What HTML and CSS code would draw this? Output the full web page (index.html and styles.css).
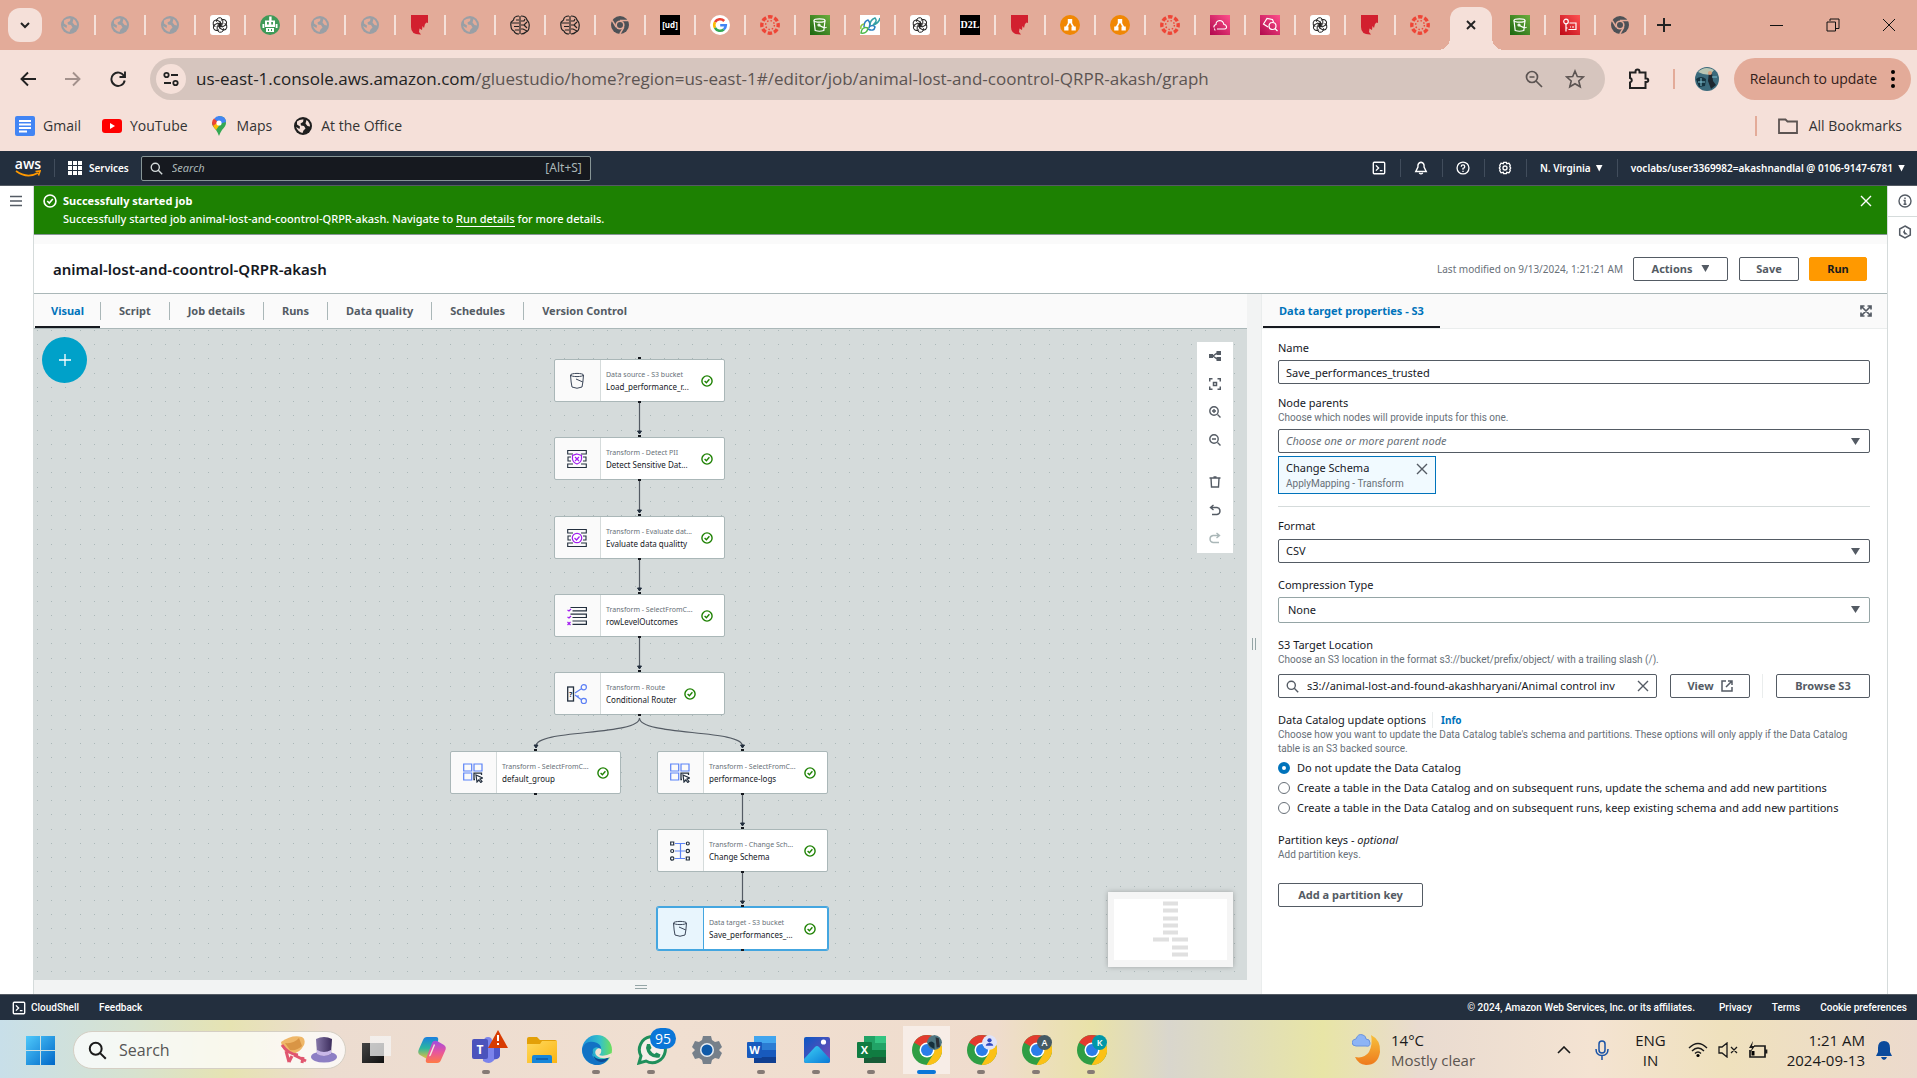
FILE: index.html
```html
<!DOCTYPE html>
<html lang="en">
<head>
<meta charset="utf-8">
<title>animal-lost-and-coontrol-QRPR-akash - AWS Glue Studio</title>
<link rel="stylesheet" href="styles.css">
</head>
<body>
<svg class="sprite" aria-hidden="true">
  <defs>
    <linearGradient id="g-green" x1="0" y1="1" x2="1" y2="0"><stop offset="0" stop-color="#1b660f"/><stop offset="1" stop-color="#6cae3e"/></linearGradient>
    <linearGradient id="g-pink" x1="0" y1="1" x2="1" y2="0"><stop offset="0" stop-color="#b0084d"/><stop offset="1" stop-color="#ff4f8b"/></linearGradient>
    <linearGradient id="g-red" x1="0" y1="1" x2="1" y2="0"><stop offset="0" stop-color="#bd0816"/><stop offset="1" stop-color="#ff5252"/></linearGradient>
    <linearGradient id="g-win" x1="0" y1="0" x2="1" y2="1"><stop offset="0" stop-color="#4fc9fb"/><stop offset="1" stop-color="#0067c8"/></linearGradient>
    <linearGradient id="g-cop1" x1="0" y1="0" x2="0" y2="1"><stop offset="0" stop-color="#1a7fe0"/><stop offset=".5" stop-color="#2bb6a0"/><stop offset="1" stop-color="#f2c037"/></linearGradient>
    <linearGradient id="g-cop2" x1="0" y1="0" x2="0" y2="1"><stop offset="0" stop-color="#a24be0"/><stop offset=".5" stop-color="#e6559f"/><stop offset="1" stop-color="#ff7a45"/></linearGradient>
    <linearGradient id="g-folder" x1="0" y1="0" x2="1" y2="1"><stop offset="0" stop-color="#ffd95e"/><stop offset="1" stop-color="#fbb512"/></linearGradient>
    <linearGradient id="g-edge" x1="0" y1="0" x2="1" y2="0"><stop offset="0" stop-color="#1b8fdc"/><stop offset=".6" stop-color="#35c1c9"/><stop offset="1" stop-color="#6ee05a"/></linearGradient>
    <linearGradient id="g-photo" x1="0" y1="0" x2="1" y2="1"><stop offset="0" stop-color="#0b57c4"/><stop offset="1" stop-color="#7d4cb5"/></linearGradient>
    <linearGradient id="g-mount" x1="0" y1="0" x2="1" y2="1"><stop offset="0" stop-color="#3ed2f5"/><stop offset="1" stop-color="#0a78d6"/></linearGradient>
    <linearGradient id="g-moon" x1="0" y1="0" x2="0" y2="1"><stop offset="0" stop-color="#f7c13c"/><stop offset="1" stop-color="#ee7a1c"/></linearGradient>
    <linearGradient id="g-hat" x1="0" y1="0" x2="1" y2="0"><stop offset="0" stop-color="#8577a8"/><stop offset="1" stop-color="#3b2c5c"/></linearGradient>
    <linearGradient id="g-dark" x1="0" y1="0" x2="1" y2="1"><stop offset="0" stop-color="#444"/><stop offset="1" stop-color="#111"/></linearGradient>
    <path id="petal" d="M6.400 6.800V5.800A3.300 3.300 0 0 1 12.300 4L12.800 4.800V9L10 10.700L7.600 9.300"/>
  </defs>
  <symbol id="globe" viewBox="0 0 20 20"><circle cx="10" cy="10" r="9" fill="currentColor"/><path d="M4 5.500Q7 3 10.500 3.500L10 6 7.500 7.500 8 9.500 11 10 12.500 12.500 10.500 14.500 9.500 17Q5 16 3 11L6.500 13 7 10.500 4 8.500ZM13.500 4Q17 6.500 17 10.500L14.500 10 12.500 7.500Z" fill="var(--hole)"/></symbol>
  <symbol id="gpt" viewBox="0 0 20 20"><rect width="20" height="20" rx="3" fill="#fff"/><g fill="none" stroke="#222" stroke-width="1"><use href="#petal"/><use href="#petal" transform="rotate(60 10 10)"/><use href="#petal" transform="rotate(120 10 10)"/><use href="#petal" transform="rotate(180 10 10)"/><use href="#petal" transform="rotate(240 10 10)"/><use href="#petal" transform="rotate(300 10 10)"/></g></symbol>
  <symbol id="robot" viewBox="0 0 20 20"><circle cx="10" cy="10" r="10" fill="#3f9a58"/><path d="M9.200 1.500h2.400v4H15v6.500H5V5.500h4.200Z" fill="#fff"/><path d="M6 13h8v4H6zM2.500 9h1.800v4H2.500zM15.700 9h1.800v4h-1.800z" fill="#fff"/><path d="M7 7h1.800v2.500H7zM11.200 7H13v2.500h-1.800zM8 14h1v2H8zM11 14h1v2h-1z" fill="#3f9a58"/></symbol>
  <symbol id="maple" viewBox="0 0 20 20"><path d="M1 0H18V8L16.500 7.500 15 9 14 13 12.500 11 12 15 9.500 13.500 9 17 11 19.500Q1 20 1 12Z" fill="#d2202f"/></symbol>
  <symbol id="brain" viewBox="0 0 20 20"><g fill="none" stroke="#222" stroke-width="1.200"><path d="M10 1v18M9 1Q4 1 3.500 5Q0 7 1 11Q1 15 4 16Q5 19 9 19M9 5H6M9 8H2M9 11.500H4M9 15H5M11 1Q16 1 17 5Q20 8 19 12Q19 16 16 17Q14 19 11 19M11 6h3l1-2M11 10h3l3-3M11 14h2l4 2M14 10l3 3"/></g></symbol>
  <symbol id="chromegrey" viewBox="0 0 20 20"><circle cx="10" cy="10" r="9" fill="#4d5156"/><circle cx="10" cy="10" r="4.600" fill="#e3ab99"/><circle cx="10" cy="10" r="3" fill="#4d5156"/><path d="M10 5.600H18M6.200 12.200L2.200 5.400M13.800 12.200L9.800 19" stroke="#e3ab99" stroke-width="1.500"/></symbol>
  <symbol id="google" viewBox="0 0 20 20"><circle cx="10" cy="10" r="10" fill="#fff"/><g fill="none" stroke-width="2.600"><path d="M14.200 6A5.800 5.800 0 0 0 5 7.200" stroke="#ea4335"/><path d="M5 7.200A5.800 5.800 0 0 0 5 12.800" stroke="#fbbc05"/><path d="M5 12.800A5.800 5.800 0 0 0 13.800 14.400" stroke="#34a853"/><path d="M13.800 14.400A5.600 5.600 0 0 0 15.800 10.200H10.200" stroke="#4285f4"/></g></symbol>
  <symbol id="canvas-lms" viewBox="0 0 20 20"><g fill="none" stroke="#ee4536"><circle cx="10" cy="10" r="8.200" stroke-width="3.400" stroke-dasharray="4.440 2" stroke-dashoffset="2.200"/><circle cx="10" cy="10" r="4.400" stroke-width="1.500" stroke-dasharray="1.450 2"/></g></symbol>
  <symbol id="s3tab" viewBox="0 0 20 20"><rect width="20" height="20" fill="url(#g-green)"/><g fill="none" stroke="#fff" stroke-width="1.200"><ellipse cx="9.500" cy="5.500" rx="5.500" ry="1.700"/><path d="M4 5.500L5.200 15.500Q9.500 17 13.800 15.500L15 5.500M9.500 10.500Q15 14 16.500 12"/><circle cx="9" cy="10" r="1"/></g></symbol>
  <symbol id="leafy" viewBox="0 0 20 20"><rect width="20" height="20" fill="#fff"/><g fill="none" stroke-width="1.500"><path d="M1 18Q2 11 8 13Q7 19 1 18Z" stroke="#4db848"/><path d="M4 12Q4 6 8 5Q11 8 9 13M8 14Q14 17 15 12Q13 9 9 12" stroke="#2a7fc0"/><path d="M10 10Q10 5 15 3Q18 6 13 10Q19 8 20 3" stroke="#34a0a4"/><path d="M1 14Q0 10 4 9" stroke="#8cc63f"/></g></symbol>
  <symbol id="drawio" viewBox="0 0 20 20"><circle cx="10" cy="10" r="10" fill="#f08705"/><path d="M10 6L6 13M10 6l4 7" stroke="#fff" stroke-width="1.600"/><path d="M7.800 4h4.400v4H7.800zM4.200 11.500h4.300v4H4.200zM11.500 11.500h4.300v4h-4.300z" fill="#fff"/></symbol>
  <symbol id="pink1" viewBox="0 0 20 20"><rect width="20" height="20" fill="url(#g-pink)"/><path d="M7 14H14.500Q17 13.500 16.500 11.500Q16 9.500 14 9.500Q13 5.500 9.500 5.500Q6 6 6 9.500Q3.500 10 4 12.500M5 14.500v1M4 14h1" fill="none" stroke="#fff" stroke-width="1.100"/></symbol>
  <symbol id="pink2" viewBox="0 0 20 20"><rect width="20" height="20" fill="url(#g-pink)"/><g fill="none" stroke="#fff" stroke-width="1.200"><path d="M8 12L3.500 9 7 3.500 12.500 4.500 13.500 7"/><circle cx="12.500" cy="11" r="3.500"/><path d="M15 13.500L17.500 16"/></g></symbol>
  <symbol id="iam" viewBox="0 0 20 20"><rect width="20" height="20" fill="url(#g-red)"/><g fill="none" stroke="#fff" stroke-width="1.200"><circle cx="6" cy="6.500" r="2.300"/><path d="M6 9v7.500M6 13h1.500M9.500 8H16v6.500H8.500M10 12h1M12 12h2"/></g></symbol>
  <symbol id="s3bucket" viewBox="0 0 20 20"><g fill="none" stroke="#3b4658" stroke-width="1"><ellipse cx="10" cy="4" rx="6.500" ry="1.600"/><path d="M3.500 4Q4 12 5 16Q10 18.500 15 16Q16 12 16.500 4M9 8L15.800 11"/></g></symbol>
  <symbol id="detect" viewBox="0 0 20 20"><g fill="none" stroke="#232f3e" stroke-width="1.100"><path d="M6 5H.700V1.500H19.300V5H14M6 15H.700V18.500H19.300V15H14M4 8H1v4h3M16 8h3v4h-3"/></g><path d="M10 5L14.500 6.500V10Q14 13.500 10 15Q6 13.500 5.500 10V6.500ZM8 8l4 4M12 8l-4 4" fill="#fff" stroke="#a21cf0" stroke-width="1.200"/></symbol>
  <symbol id="evaluate" viewBox="0 0 20 20"><g fill="none" stroke="#232f3e" stroke-width="1.100"><path d="M6 5H.700V1.500H19.300V5H14M6 15H.700V18.500H19.300V15H14M4 8H1v4h3M16 8h3v4h-3"/></g><circle cx="10" cy="10" r="4.700" fill="#fff" stroke="#a21cf0" stroke-width="1.200"/><path d="M7.500 10l2 2 3-3.500" fill="none" stroke="#a21cf0" stroke-width="1.200"/></symbol>
  <symbol id="rows" viewBox="0 0 20 20"><g fill="none" stroke="#232f3e" stroke-width="1.200"><path d="M3.500 1.500H19.400V4.800H5.500M5.500 8.200H19.400V11.500H5.500M3.500 8.200H6M5.500 15H19.400V18.300H5.500"/></g><path d="M.500 4l1.500 1L4 3M.500 11l1.500 1L4 10M.500 16l3 3M3.500 16l-3 3" fill="none" stroke="#a21cf0" stroke-width="1.200"/></symbol>
  <symbol id="selectc" viewBox="0 0 20 20"><g fill="none" stroke="#5b83f7" stroke-width="1.200"><path d="M.700 1h8v7h-8zM11 1h8v7h-8zM.700 10h8v7h-8z"/></g><path d="M18.500 12V10.200H11V16.500h1" fill="none" stroke="#232f3e" stroke-width="1.300"/><path d="M13 12l6.500 3-2.500 1 2 2.500-1.200 1-2-2.500L14 19Z" fill="#fff" stroke="#232f3e" stroke-width="1.200"/></symbol>
  <symbol id="schema" viewBox="0 0 20 20"><path d="M5 2.500H15M5 10H15M5 17.500H15M10.500 2.500V17.500" stroke="#5b83f7" stroke-width="1.200" fill="none"/><g fill="#fff" stroke="#232f3e" stroke-width="1.200"><path d="M.700 1h3v3h-3zM16.300 16h3v3h-3z"/><circle cx="2.200" cy="10" r="1.500"/><circle cx="2.200" cy="17.500" r="1.700"/><circle cx="17.800" cy="2.500" r="1.500"/><circle cx="17.800" cy="10" r="1.700"/></g></symbol>
  <symbol id="ok" viewBox="0 0 12 12"><circle cx="6" cy="6" r="5.100" fill="none" stroke="currentColor" stroke-width="1.400"/><path d="M3.600 6l1.800 1.700L8.400 4.300" fill="none" stroke="currentColor" stroke-width="1.400"/></symbol>
  <symbol id="cross" viewBox="0 0 12 12"><path d="M1 1l10 10M11 1L1 11" fill="none" stroke="currentColor" stroke-width="1.400"/></symbol>
  <symbol id="search" viewBox="0 0 16 16"><circle cx="6.500" cy="6.500" r="5" fill="none" stroke="currentColor" stroke-width="1.700"/><path d="M10.200 10.200L15 15" stroke="currentColor" stroke-width="1.700"/></symbol>
  <symbol id="shell" viewBox="0 0 16 16"><rect x="1.500" y="1.500" width="13" height="13" rx="1" fill="none" stroke="currentColor" stroke-width="1.600"/><path d="M4.500 5l3 3-3 3M9 11h3" fill="none" stroke="currentColor" stroke-width="1.600"/></symbol>
  <symbol id="chrome" viewBox="0 0 30 30"><circle cx="15" cy="15" r="15" fill="#2f9e44"/><path d="M15 0A15 15 0 0 1 28 7.500H15L8.500 11.300 2 7.500A15 15 0 0 1 15 0Z" fill="#e33b2e"/><path d="M28 7.500A15 15 0 0 1 14.500 30L21.500 18.700 21.500 11.200 15 7.500Z" fill="#fbc116"/><circle cx="15" cy="15" r="7.500" fill="#fff"/><circle cx="15" cy="15" r="6" fill="#2a7de9"/></symbol>
</svg>

<header class="browser">
  <div class="tabstrip">
    <button class="tabsearch" aria-label="Search tabs"><svg viewBox="0 0 12 12" width="12" height="12"><path d="M2 4l4 4 4-4" fill="none" stroke="#222" stroke-width="2"/></svg></button>
    <ul class="tabs">
      <li><svg class="fav grey"><use href="#globe"/></svg></li>
      <li><svg class="fav grey"><use href="#globe"/></svg></li>
      <li><svg class="fav grey"><use href="#globe"/></svg></li>
      <li><svg class="fav"><use href="#gpt"/></svg></li>
      <li><svg class="fav"><use href="#robot"/></svg></li>
      <li><svg class="fav grey"><use href="#globe"/></svg></li>
      <li><svg class="fav grey"><use href="#globe"/></svg></li>
      <li><svg class="fav"><use href="#maple"/></svg></li>
      <li><svg class="fav grey"><use href="#globe"/></svg></li>
      <li><svg class="fav"><use href="#brain"/></svg></li>
      <li><svg class="fav"><use href="#brain"/></svg></li>
      <li><svg class="fav"><use href="#chromegrey"/></svg></li>
      <li><span class="tile">[ud]</span></li>
      <li><svg class="fav"><use href="#google"/></svg></li>
      <li><svg class="fav"><use href="#canvas-lms"/></svg></li>
      <li><svg class="fav"><use href="#s3tab"/></svg></li>
      <li><svg class="fav"><use href="#leafy"/></svg></li>
      <li><svg class="fav"><use href="#gpt"/></svg></li>
      <li><span class="tile d2l">D2L</span></li>
      <li><svg class="fav"><use href="#maple"/></svg></li>
      <li><svg class="fav"><use href="#drawio"/></svg></li>
      <li><svg class="fav"><use href="#drawio"/></svg></li>
      <li><svg class="fav"><use href="#canvas-lms"/></svg></li>
      <li><svg class="fav"><use href="#pink1"/></svg></li>
      <li><svg class="fav"><use href="#pink2"/></svg></li>
      <li><svg class="fav"><use href="#gpt"/></svg></li>
      <li><svg class="fav"><use href="#maple"/></svg></li>
      <li class="last"><svg class="fav"><use href="#canvas-lms"/></svg></li>
      <li class="current"><button aria-label="Close tab"><svg viewBox="0 0 10 10" width="10" height="10"><path d="M1 1l8 8M9 1L1 9" stroke="#222" stroke-width="1.900"/></svg></button></li>
      <li><svg class="fav"><use href="#s3tab"/></svg></li>
      <li><svg class="fav"><use href="#iam"/></svg></li>
      <li><svg class="fav"><use href="#chromegrey"/></svg></li>
    </ul>
    <button class="newtab" aria-label="New tab"><svg viewBox="0 0 14 14" width="14" height="14"><path d="M7 0v14M0 7h14" stroke="#222" stroke-width="2"/></svg></button>
    <div class="winctl">
      <button aria-label="Minimize"><svg viewBox="0 0 14 14" width="14" height="14"><path d="M0 7.500h13" stroke="#111"/></svg></button>
      <button aria-label="Restore"><svg viewBox="0 0 14 14" width="14" height="14"><path d="M1 4h8.500v9H1zM4 3V1h9v9.500h-3" fill="none" stroke="#111"/></svg></button>
      <button aria-label="Close window"><svg viewBox="0 0 14 14" width="14" height="14"><path d="M1 1l12 12M13 1L1 13" stroke="#111"/></svg></button>
    </div>
  </div>
  <div class="toolbar">
    <button aria-label="Back"><svg viewBox="0 0 16 16" width="16" height="16"><path d="M16 8H2M8 1.500L1.500 8 8 14.500" fill="none" stroke="#222" stroke-width="1.900"/></svg></button>
    <button aria-label="Forward"><svg viewBox="0 0 16 16" width="16" height="16"><path d="M0 8H14M8 1.500L14.500 8 8 14.500" fill="none" stroke="#a3918c" stroke-width="1.900"/></svg></button>
    <button aria-label="Reload"><svg viewBox="0 0 16 16" width="16" height="16"><path d="M14 5A6.700 6.700 0 1 0 14.700 9.500M15 .500V6H9.500" fill="none" stroke="#222" stroke-width="1.900"/></svg></button>
    <div class="omnibox">
      <button class="siteinfo" aria-label="Site information"><svg viewBox="0 0 16 16" width="16" height="16"><g fill="none" stroke="#222" stroke-width="1.800"><circle cx="3.500" cy="4" r="2.200"/><circle cx="12.500" cy="12" r="2.200"/><path d="M8 4h7M1 12h7"/></g></svg></button>
      <p class="url"><b>us-east-1.console.aws.amazon.com</b>/gluestudio/home?region=us-east-1#/editor/job/animal-lost-and-coontrol-QRPR-akash/graph</p>
      <svg viewBox="0 0 18 18" width="18" height="18"><circle cx="7" cy="7" r="5.500" fill="none" stroke="#5c5452" stroke-width="1.700"/><path d="M11 11l6 6M4.500 7h5" stroke="#5c5452" stroke-width="1.700"/></svg>
      <svg viewBox="0 0 20 20" width="20" height="20"><path d="M10 2l2.300 5.500 6 .500-4.500 4 1.400 5.800L10 14.700 4.800 17.800 6.200 12 1.700 8l6-.500Z" fill="none" stroke="#5c5452" stroke-width="1.600"/></svg>
    </div>
    <svg class="ext" viewBox="0 0 22 22" width="22" height="22"><path d="M2 4.500H7.500V3.500A2 2 0 0 1 11.500 3.500V4.500H17.500V10.500H18.500A1.600 1.600 0 0 1 18.500 14H17.500V20H2V14.500A2.300 2.300 0 0 0 2 10Z" fill="none" stroke="#222" stroke-width="2"/></svg>
    <span class="bar"></span>
    <svg class="avatar" viewBox="0 0 24 24" width="24" height="24"><circle cx="12" cy="12" r="12" fill="#3b6a7c"/><path d="M3 5Q10 -2 19 3L15 8 8 7Z" fill="#b9c6b4"/><path d="M1 12Q6 8 11 12L10 19 4 20Z" fill="#14323f"/><path d="M14 5l3 1 1 8 3 4-5 4-3-8Z" fill="#1c2730"/><circle cx="15" cy="6" r="2" fill="#d9a07c"/><path d="M3 15h7M6 11v8M17 10h5" stroke="#7fc0d2"/></svg>
    <button class="relaunch">Relaunch to update<svg viewBox="0 0 4 20" width="4" height="20"><circle cx="2" cy="3" r="2"/><circle cx="2" cy="10" r="2"/><circle cx="2" cy="17" r="2"/></svg></button>
  </div>
  <nav class="bookmarks">
    <a href="#gmail"><svg viewBox="0 0 20 20" width="20" height="20"><rect width="20" height="20" rx="2" fill="#4285f4"/><path d="M4 5h12M4 8.500h12M4 12h12M4 15.500h8" stroke="#fff" stroke-width="1.800"/></svg>Gmail</a>
    <a href="#youtube"><svg viewBox="0 0 20 20" width="20" height="20"><rect y="3" width="20" height="14" rx="3" fill="#f00"/><path d="M8 7l5 3-5 3Z" fill="#fff"/></svg>YouTube</a>
    <a href="#maps"><svg viewBox="0 0 20 20" width="20" height="20"><path d="M10 0Q17 0 17 7Q17 10 13 14Q11 17 10 20Q9 17 7 14Q3 10 3 7Z" fill="#34a853"/><path d="M10 0Q17 0 17 6L10 8 5 3Q7 0 10 0Z" fill="#4285f4"/><path d="M5 2.500L10 7 4.500 11Q3 8 3 7Q3 4 5 2.500Z" fill="#ea4335"/><path d="M4 10L8 7h4L7 14Z" fill="#fbbc04"/><circle cx="10" cy="7" r="2.600" fill="#fff"/></svg>Maps</a>
    <a href="#office"><svg class="fav dark"><use href="#globe"/></svg>At the Office</a>
    <span class="bar push"></span>
    <a href="#all"><svg viewBox="0 0 20 16" width="20" height="16"><path d="M1 1.500h6.500l2 2H19V15H1Z" fill="none" stroke="#5c5452" stroke-width="1.800"/></svg>All Bookmarks</a>
  </nav>
</header>

<div class="awsnav">
  <a class="awslogo" href="#home" aria-label="aws"><span>aws</span><svg viewBox="0 0 26 8" width="26" height="8"><path d="M1 1Q12 9 23 3M20.500 1.500L25 1 23.500 5.500" fill="none" stroke="#f90" stroke-width="1.700"/></svg></a>
  <i class="sep"></i>
  <button class="services"><svg viewBox="0 0 14 14" width="14" height="14"><path d="M0 2h14M0 7h14M0 12h14" stroke="#fff" stroke-width="4" stroke-dasharray="4 1"/></svg>Services</button>
  <label class="awssearch"><svg width="13" height="13"><use href="#search"/></svg><input type="search" placeholder="Search" aria-label="Search services"><span>[Alt+S]</span></label>
  <div class="awsright">
    <button aria-label="CloudShell"><svg width="14" height="14"><use href="#shell"/></svg></button>
    <button aria-label="Notifications"><svg viewBox="0 0 16 16" width="14" height="14"><path d="M8 1.500Q12 2 11.500 7L14 12H2L4.500 7Q4 2 8 1.500ZM6 13.500Q8 16 10 13.500" fill="none" stroke="currentColor" stroke-width="1.600"/></svg></button>
    <button aria-label="Help"><svg viewBox="0 0 16 16" width="14" height="14"><circle cx="8" cy="8" r="6.800" fill="none" stroke="currentColor" stroke-width="1.500"/><path d="M6 6.500Q6 4.500 8 4.500T10 6.500Q10 8 8 8.500V10M8 11v1.500" fill="none" stroke="currentColor" stroke-width="1.500"/></svg></button>
    <button aria-label="Settings"><svg viewBox="0 0 16 16" width="14" height="14"><path d="M6.500 1.500h3l.5 1.500 2.500-.500 1.500 2.500-.500 1.500 1 1.500-1 1.500.500 1.500-1.500 2.500-2.500-.500-.500 1.500h-3L6 13l-2.500.500L2 11l.500-1.500L1.500 8l1-1.500L2 5l1.500-2.500L6 3Z" fill="none" stroke="currentColor" stroke-width="1.500"/><circle cx="8" cy="8" r="2.300" fill="none" stroke="currentColor" stroke-width="1.500"/></svg></button>
    <button>N. Virginia<i class="caret"></i></button>
    <button class="acct">voclabs/user3369982=akashnandlal @ 0106-9147-6781<i class="caret"></i></button>
  </div>
</div>

<div class="app">
  <aside class="rail-l"><button aria-label="Open menu"><svg viewBox="0 0 12 12" width="12" height="12"><path d="M0 1.500h12M0 6h12M0 10.500h12" stroke="#545b64" stroke-width="1.300"/></svg></button></aside>
  <main class="main">
    <section class="flash">
      <svg class="okicon" width="14" height="14"><use href="#ok"/></svg>
      <div>
        <h2>Successfully started job</h2>
        <p>Successfully started job animal-lost-and-coontrol-QRPR-akash. Navigate to <a href="#runs">Run details</a> for more details.</p>
      </div>
      <button aria-label="Dismiss"><svg width="12" height="12"><use href="#cross"/></svg></button>
    </section>
    <section class="titlebar">
      <h1>animal-lost-and-coontrol-QRPR-akash</h1>
      <span class="modified">Last modified on 9/13/2024, 1:21:21 AM</span>
      <button class="btn actions">Actions<i class="caret"></i></button>
      <button class="btn save">Save</button>
      <button class="btn run">Run</button>
    </section>
    <div class="split">
      <section class="left">
        <nav class="subtabs">
          <a class="on" href="#visual">Visual</a><a href="#script">Script</a><a href="#details">Job details</a><a href="#runs">Runs</a><a href="#quality">Data quality</a><a href="#schedules">Schedules</a><a href="#version">Version Control</a>
        </nav>
        <div class="canvas">
          <svg class="dots" width="100%" height="100%"><defs><pattern id="dotgrid" width="57" height="57" patternUnits="userSpaceOnUse"><path d="M3 1h1M17 1h1M31 1h1M46 1h1M3 15h1M17 15h1M31 15h1M46 15h1M3 29h1M17 29h1M31 29h1M46 29h1M3 44h1M17 44h1M31 44h1M46 44h1" transform="translate(0 .5)" stroke="#aab7b8"/></pattern></defs><rect width="100%" height="100%" fill="url(#dotgrid)"/></svg>
          <button class="add" aria-label="Add node"><svg viewBox="0 0 12 12" width="12" height="12"><path d="M6 0v12M0 6h12" stroke="#fff" stroke-width="1.300"/></svg></button>
          <div class="graph">
            <svg class="edges" viewBox="0 0 381 640" width="381" height="640">
              <g fill="none" stroke="#545b64" stroke-width="1.200">
                <path d="M189.500 74V103M189.500 152V182M189.500 231V260M189.500 309V338M292.500 466V495M292.500 544V573"/>
                <path d="M189.500 389C189.500 407 86 400 86 417M189.500 389C189.500 407 292.500 400 292.500 417"/>
              </g>
              <path d="M187.500 102h4l-2 3zM187.500 181h4l-2 3zM187.500 259h4l-2 3zM187.500 337h4l-2 3zM84 416h4l-2 3zM290.500 416h4l-2 3zM290.500 494h4l-2 3zM290.500 572h4l-2 3z" fill="#232f3e" stroke="#232f3e"/>
            </svg>
            <div class="node" style="left:104px;top:30px"><svg><use href="#s3bucket"/></svg><p><small>Data source - S3 bucket</small>Load_performance_r...</p><svg class="st"><use href="#ok"/></svg></div>
            <div class="node" style="left:104px;top:108px"><svg><use href="#detect"/></svg><p><small>Transform - Detect PII</small>Detect Sensitive Dat...</p><svg class="st"><use href="#ok"/></svg></div>
            <div class="node" style="left:104px;top:187px"><svg><use href="#evaluate"/></svg><p><small>Transform - Evaluate dat...</small>Evaluate data qualitty</p><svg class="st"><use href="#ok"/></svg></div>
            <div class="node" style="left:104px;top:265px"><svg><use href="#rows"/></svg><p><small>Transform - SelectFromC...</small>rowLevelOutcomes</p><svg class="st"><use href="#ok"/></svg></div>
            <div class="node narrow" style="left:104px;top:343px"><svg viewBox="0 0 20 20"><rect x=".700" y="3" width="5.800" height="14" fill="none" stroke="#232f3e" stroke-width="1.300"/><text x="3.700" y="12.500" text-anchor="middle" font-size="7" font-weight="700" fill="#232f3e">?</text><g fill="none" stroke="#5b7ff5" stroke-width="1.200"><circle cx="16.800" cy="3.200" r="2.600"/><circle cx="16.800" cy="17" r="2.600"/><path d="M8 9l6-4M8 11l6 4.500M9 11.800L12 12"/></g></svg><p><small>Transform - Route</small>Conditional Router</p><svg class="st"><use href="#ok"/></svg></div>
            <div class="node" style="left:0px;top:422px"><svg><use href="#selectc"/></svg><p><small>Transform - SelectFromC...</small>default_group</p><svg class="st"><use href="#ok"/></svg></div>
            <div class="node" style="left:207px;top:422px"><svg><use href="#selectc"/></svg><p><small>Transform - SelectFromC...</small>performance-logs</p><svg class="st"><use href="#ok"/></svg></div>
            <div class="node" style="left:207px;top:500px"><svg><use href="#schema"/></svg><p><small>Transform - Change Sch...</small>Change Schema</p><svg class="st"><use href="#ok"/></svg></div>
            <div class="node sel" style="left:207px;top:578px"><svg><use href="#s3bucket"/></svg><p><small>Data target - S3 bucket</small>Save_performances_...</p><svg class="st"><use href="#ok"/></svg></div>
          </div>
          <div class="tools">
            <button aria-label="Layout"><svg viewBox="0 0 12 12"><path d="M0 4h4v4H0zM7.500 1H12v4H7.500zM7.500 7H12v4H7.500z" fill="currentColor"/><path d="M4 6l4-3M4 6l4 3" stroke="currentColor" stroke-width="1.500"/></svg></button>
            <button aria-label="Fit to screen"><svg viewBox="0 0 12 12"><path d="M.700 3.500V.700H3.500M8.500.700h2.800V3.500M11.300 8.500v2.800H8.500M3.500 11.300H.700V8.500M4.500 4.500h3v3h-3z" fill="none" stroke="currentColor" stroke-width="1.500"/></svg></button>
            <button aria-label="Zoom in"><svg viewBox="0 0 12 12"><path d="M8.500 8.500l3 3M3 5h4M5 3v4" stroke="currentColor" stroke-width="1.400"/><circle cx="5" cy="5" r="4.200" fill="none" stroke="currentColor" stroke-width="1.400"/></svg></button>
            <button aria-label="Zoom out"><svg viewBox="0 0 12 12"><path d="M8.500 8.500l3 3M3 5h4" stroke="currentColor" stroke-width="1.400"/><circle cx="5" cy="5" r="4.200" fill="none" stroke="currentColor" stroke-width="1.400"/></svg></button>
            <button class="gap" aria-label="Delete"><svg viewBox="0 0 12 12"><path d="M.500 2h11M4.500 1h3M2 2l.500 9h7L10 2" fill="none" stroke="currentColor" stroke-width="1.400"/></svg></button>
            <button aria-label="Undo"><svg viewBox="0 0 12 12"><path d="M4.500 1L1.500 3.500 4.500 6M2 3.500H8Q11 4 11 7T8 10.500H3" fill="none" stroke="currentColor" stroke-width="1.400"/></svg></button>
            <button disabled aria-label="Redo"><svg viewBox="0 0 12 12"><path d="M7.500 1l3 2.500-3 2.500M10 3.500H4Q1 4 1 7T4 10.500H10" fill="none" stroke="currentColor" stroke-width="1.400"/></svg></button>
          </div>
          <div class="minimap"><svg viewBox="0 0 113 61" width="113" height="61"><path d="M49 4.500h15M49 11.500h15M49 19.500h15M49 26.500h15M49 33.500h15M39 40.500h16M58 40.500h16M58 48.500h16M58 55.500h16" stroke="#e0e0e0" stroke-width="4"/></svg></div>
        </div>
        <div class="hsplit"><i></i></div>
      </section>
      <div class="vsplit"><i></i></div>
      <section class="props">
        <header class="phead"><a href="#target">Data target properties - S3</a><button aria-label="Expand"><svg viewBox="0 0 12 12" width="12" height="12"><path d="M1 4.500V1H4.500M7.500 1H11V4.500M11 7.500V11H7.500M4.500 11H1V7.500M1 1l10 10M11 1L1 11" fill="none" stroke="#545b64" stroke-width="1.700"/></svg></button></header>
        <form class="pbody">
          <label class="lbl" for="name">Name</label>
          <input class="box" id="name" type="text" value="Save_performances_trusted">
          <label class="lbl l2" for="parents">Node parents</label>
          <p class="hint">Choose which nodes will provide inputs for this one.</p>
          <div class="sel-wrap"><select class="box ph" id="parents"><option>Choose one or more parent node</option></select></div>
          <div class="token"><div>Change Schema<small>ApplyMapping - Transform</small></div><button type="button" aria-label="Remove Change Schema"><svg width="12" height="12"><use href="#cross"/></svg></button></div>
          <hr>
          <label class="lbl l2" for="format">Format</label>
          <div class="sel-wrap"><select class="box low" id="format"><option>CSV</option></select></div>
          <label class="lbl l3" for="comp">Compression Type</label>
          <div class="sel-wrap"><select class="box tall" id="comp"><option>None</option></select></div>
          <label class="lbl l3" for="loc">S3 Target Location</label>
          <p class="hint">Choose an S3 location in the format s3://bucket/prefix/object/ with a trailing slash (/).</p>
          <div class="locrow">
            <div class="loc"><svg width="13" height="13"><use href="#search"/></svg><input id="loc" type="text" value="s3://animal-lost-and-found-akashharyani/Animal control inv"><button type="button" aria-label="Clear"><svg width="12" height="12"><use href="#cross"/></svg></button></div>
            <button type="button" class="btn view">View<svg viewBox="0 0 12 12" width="12" height="12"><path d="M5 1H1v10h10V7M7 1h4v4M11 1L5 7" fill="none" stroke="currentColor" stroke-width="1.500"/></svg></button>
            <i></i>
            <button type="button" class="btn browse">Browse S3</button>
          </div>
          <fieldset>
            <legend>Data Catalog update options<a href="#info">Info</a></legend>
            <p class="hint">Choose how you want to update the Data Catalog table's schema and partitions. These options will only apply if the Data Catalog table is an S3 backed source.</p>
            <div class="radios">
              <label><input type="radio" name="cat" checked>Do not update the Data Catalog</label>
              <label><input type="radio" name="cat">Create a table in the Data Catalog and on subsequent runs, update the schema and add new partitions</label>
              <label><input type="radio" name="cat">Create a table in the Data Catalog and on subsequent runs, keep existing schema and add new partitions</label>
            </div>
          </fieldset>
          <p class="lbl l3">Partition keys - <em>optional</em></p>
          <p class="hint">Add partition keys.</p>
          <button type="button" class="btn addkey">Add a partition key</button>
        </form>
      </section>
    </div>
  </main>
  <aside class="rail-r">
    <button aria-label="Info panel"><svg viewBox="0 0 14 14" width="14" height="14"><circle cx="7" cy="7" r="6" fill="none" stroke="#545b64" stroke-width="1.400"/><path d="M5.500 6.500H7V10M5.500 10.200h3M7 3.500v1.500" fill="none" stroke="#545b64" stroke-width="1.400"/></svg></button>
    <button aria-label="Resources"><svg viewBox="0 0 14 14" width="14" height="14"><path d="M7 1l5.300 3v6L7 13 1.700 10V4Z" fill="none" stroke="#545b64" stroke-width="1.500"/><path d="M7 4v3l3 2.500H6.500L5 7Z" fill="#545b64"/></svg></button>
  </aside>
</div>

<footer class="awsfoot">
  <a href="#shell"><svg width="14" height="14"><use href="#shell"/></svg>CloudShell</a>
  <a href="#feedback">Feedback</a>
  <span>© 2024, Amazon Web Services, Inc. or its affiliates.</span>
  <a href="#privacy">Privacy</a>
  <a href="#terms">Terms</a>
  <a href="#cookies">Cookie preferences</a>
</footer>

<div class="taskbar">
  <button class="start" aria-label="Start"><svg viewBox="0 0 29 29" width="29" height="29"><path d="M0 0h14v14H0zM15 0h14v14H15zM0 15h14v14H0zM15 15h14v14H15z" fill="url(#g-win)"/></svg></button>
  <label class="tsearch"><svg width="19" height="19"><use href="#search"/></svg><input type="search" placeholder="Search" aria-label="Search Windows">
    <svg viewBox="0 0 58 28" width="58" height="28"><path d="M1 6Q12 -2 22 1Q26 3 24 9Q18 20 8 17Q2 14 1 6Z" fill="#efb768"/><path d="M5 7Q14 8 19 2L22 10Q17 15 10 14Z" fill="#d99545"/><path d="M2 9Q8 18 18 19M6 15l3 11M14 19l12 6M9 26l3-6M22 27l1-6" stroke="#e0566f" stroke-width="3" fill="none"/><ellipse cx="44" cy="21" rx="13" ry="5.500" fill="#8d7fc4"/><path d="M36 3Q44 -1 52 3L51 18Q44 22 37 18Z" fill="url(#g-hat)"/><path d="M37 14Q44 18 51 14V18Q44 22 37 18Z" fill="#c9b8e8"/></svg>
  </label>
  <ul class="apps">
    <li><svg viewBox="0 0 30 30"><path d="M0 8h22v20H0z" fill="url(#g-dark)"/><path d="M8 1h21v20H8z" fill="#f4f4f4" fill-opacity=".75"/></svg></li>
    <li><svg viewBox="0 0 30 30"><path d="M10 2H19Q22 2 21 6L15 22Q14 25 10 24L3 20Q0 18 2 14L6 5Q7 2 10 2Z" fill="url(#g-cop1)"/><path d="M20 28H11Q8 28 9 24L15 8Q16 5 20 6L27 10Q30 12 28 16L24 25Q23 28 20 28Z" fill="url(#g-cop2)"/><path d="M17 9L12 21Q13 22 14 20L18 10Z" fill="#f6e6dd"/></svg></li>
    <li class="run"><svg viewBox="0 0 30 30"><circle cx="16" cy="6" r="4" fill="#7b83eb"/><path d="M10 9H23V24Q18 31 11 26Z" fill="#7b83eb"/><path d="M22 11h6v10q-2 4-6 3z" fill="#5059c9"/><rect y="4" width="16" height="20" rx="2" fill="#4b53bc"/><text x="8" y="19" text-anchor="middle" font-size="12" font-weight="700" fill="#fff">T</text></svg>
      <svg class="warn" viewBox="0 0 20 18"><path d="M10 0L20 18H0Z" fill="#d83b01"/><path d="M10 5v6M10 13v2" stroke="#fff" stroke-width="2"/></svg></li>
    <li><svg viewBox="0 0 30 30"><path d="M0 4Q0 2 2 2H10L13 5H28Q30 5 30 7V12H0Z" fill="#e3a008"/><path d="M0 9H13L15 6H30V28H0Z" fill="url(#g-folder)"/><path d="M5 28V22Q5 20 7 20H23Q25 20 25 22V28Z" fill="#1686d9"/><path d="M9 24h12" stroke="#0c59a4" stroke-width="1.500"/></svg></li>
    <li class="run"><svg viewBox="0 0 30 30"><circle cx="15" cy="15" r="15" fill="url(#g-edge)"/><path d="M0 14Q3 5 12 7Q20 9 19 15Q15 10 11 14Q8 20 13 24Q19 29 27 23Q22 31 13 30Q1 27 0 14Z" fill="#1272c4"/><path d="M11 14Q9 20 14 23Q20 26 27 22Q25 27 19 27Q10 26 11 14Z" fill="#0b4a94"/><path d="M14 15Q16 12 19 14Q20 18 17 20Q22 22 30 18L29 22Q20 25 15 21Q12 18 14 15Z" fill="#f3e2d3"/></svg></li>
    <li class="run"><svg viewBox="0 0 30 30"><path d="M2 28L4 21A13 13 0 1 1 9 26Z" fill="#f6efe9" stroke="#1f8f5b" stroke-width="3"/><path d="M10 9l3 0 1.500 4-1.500 2q2 3 4.500 4l2-1.500 4 2-1 3Q11 24 9 13Z" fill="#1f8f5b"/></svg><b class="count">95</b></li>
    <li><svg viewBox="0 0 30 30"><path d="M11 1h8l1 4 3 2 4-1 3 6-3 3 3 3-3 6-4-1-3 2-1 4h-8l-1-4-3-2-4 1-3-6 3-3-3-3 3-6 4 1 3-2Z" fill="#76808a"/><circle cx="15" cy="15" r="7" fill="#e8edf2"/><circle cx="15" cy="15" r="5.500" fill="#0f5aa8"/></svg></li>
    <li class="run"><svg viewBox="0 0 30 30"><path d="M7 1H29V8H7z" fill="#41a5ee"/><path d="M7 8H29v7H7z" fill="#2b7cd3"/><path d="M7 15H29v7H7z" fill="#185abd"/><path d="M7 22H29v6H7z" fill="#103f91"/><rect y="7" width="15" height="16" rx="1" fill="#185abd"/><text x="7.500" y="19" text-anchor="middle" font-size="11" font-weight="700" fill="#fff">W</text></svg></li>
    <li class="run"><svg viewBox="0 0 30 30"><rect x="2" y="2" width="26" height="26" rx="2" fill="url(#g-photo)"/><path d="M2 24L13 12Q15 10 17 12L28 24V26Q28 28 26 28H4Q2 28 2 26Z" fill="url(#g-mount)"/><circle cx="21.500" cy="7" r="2.600" fill="#fff"/></svg></li>
    <li class="run"><svg viewBox="0 0 30 30"><path d="M7 1H29V28H7z" fill="#21a366"/><path d="M18 1H29V8H18z" fill="#33c481"/><path d="M7 15H29v7H7z" fill="#107c41"/><path d="M7 22H29v6H7z" fill="#185c37"/><rect y="7" width="15" height="16" rx="1" fill="#107c41"/><text x="7.500" y="19" text-anchor="middle" font-size="11" font-weight="700" fill="#fff">X</text></svg></li>
    <li class="active"><svg><use href="#chrome"/></svg><svg class="who" viewBox="0 0 14 14"><circle cx="7" cy="7" r="7" fill="#4f7682"/><path d="M1 8Q4 4 7 8V13Q3 12 1 8Z" fill="#15303c"/><path d="M8 2l3 1 1 8-3 1Z" fill="#2a2f36"/></svg></li>
    <li class="run"><svg><use href="#chrome"/></svg><svg class="who" viewBox="0 0 14 14"><circle cx="7" cy="7" r="7" fill="#dfe3fa"/><circle cx="7" cy="5" r="2" fill="#3048c0"/><path d="M3.500 10Q4 7.500 7 7.500T10.500 10Z" fill="#3048c0"/></svg></li>
    <li class="run"><svg><use href="#chrome"/></svg><b class="who a">A</b></li>
    <li class="run"><svg><use href="#chrome"/></svg><b class="who k">K</b></li>
  </ul>
  <div class="weather"><svg viewBox="0 0 30 34" width="30" height="34"><path d="M19 2Q29 7 28 19Q26 32 14 32Q6 31 3 24Q12 26 17 19Q21 11 19 2Z" fill="url(#g-moon)"/><path d="M4 13Q0 13 0 9Q1 6 4 6Q6 0 11 2Q14 3 14 6Q18 6 18 10T14 13Z" fill="#8db4f5" stroke="#6b94dd"/></svg><p>14°C<span>Mostly clear</span></p></div>
  <div class="tray">
    <svg class="chev" viewBox="0 0 14 8" width="14" height="8"><path d="M1 7l6-6 6 6" fill="none" stroke="#1a1a1a" stroke-width="1.600"/></svg>
    <svg class="mic" viewBox="0 0 14 20" width="14" height="20"><rect x="4" y="1" width="6" height="12" rx="3" fill="none" stroke="#1a53a6" stroke-width="1.500"/><path d="M1 9Q1 15.500 7 15.500T13 9M7 15.500V20" fill="none" stroke="#1a53a6" stroke-width="1.500"/></svg>
    <p class="lang">ENG<br>IN</p>
    <svg viewBox="0 0 20 16" width="20" height="16"><g fill="none" stroke="#1a1a1a" stroke-width="1.400"><path d="M1 6Q10 -3 19 6M4 9Q10 3 16 9M7 11.500Q10 8.500 13 11.500"/></g><circle cx="10" cy="13.500" r="1.600"/></svg>
    <svg class="vol" viewBox="0 0 20 16" width="20" height="16"><path d="M1 5h3l5-4v14l-5-4H1ZM13 5l6 6M19 5l-6 6" fill="none" stroke="#1a1a1a" stroke-width="1.300"/></svg>
    <svg viewBox="0 0 20 20" width="20" height="20"><path d="M6 6H17V17H2V10M18.500 9.500v4" fill="none" stroke="#1a1a1a" stroke-width="1.700"/><path d="M5 1L1 8h3L2 13l5-7H4Z" fill="#1a1a1a"/><path d="M3.500 11h3v4.500h-3z"/></svg>
    <p class="clock">1:21 AM<br>2024-09-13</p>
    <svg viewBox="0 0 18 20" width="18" height="20"><path d="M9 1Q15 1 15 8V12L17 16H1L3 12V8Q3 1 9 1ZM6 17h6Q11 20 9 20T6 17Z" fill="#0a4a9c"/></svg>
  </div>
</div>
</body>
</html>
```
FILE: styles.css
```css
* { box-sizing: border-box; }
body, h1, h2, p, ul, fieldset, legend { margin: 0; padding: 0; }
body {
  height: 100vh;
  display: flex;
  flex-direction: column;
  background: #fff;
  color: #16191f;
  font: 11px/16px "Noto Sans", "Open Sans", sans-serif;
  overflow: hidden;
}
ul { list-style: none; }
a { color: inherit; text-decoration: none; }
button { font: inherit; color: inherit; background: none; border: 0; padding: 0; display: flex; align-items: center; justify-content: center; }
input, select { font: inherit; color: inherit; border-radius: 0; outline: 0; }
svg { flex: none; display: block; }
.sprite { position: absolute; width: 0; height: 0; }
.fav { width: 20px; height: 20px; --hole: #e3ab99; }
.fav.grey { color: #9a9fa5; }
.fav.dark { color: #1f1f1f; --hole: #f5e0d9; }

/* browser */
.browser { height: 151px; background: #f5e0d9; font: 14px/20px "Open Sans", sans-serif; color: #333; }
.tabstrip { display: flex; align-items: center; height: 50px; background: #e3ab99; padding-left: 8px; }
.tabsearch { width: 34px; height: 34px; border-radius: 12px; background: #f5e0d9; }
.tabs { display: flex; align-items: center; height: 50px; padding-left: 4px; }
.tabs li { width: 50px; height: 20px; display: flex; align-items: center; justify-content: center; border-right: 2px solid #f5e0d9; }
.tabs li.last { border-color: transparent; }
.tabs li.current { position: relative; width: 42px; height: 43px; margin: 7px 4px 0; padding-bottom: 7px; background: #f5e0d9; border: 0; border-radius: 12px 12px 0 0; }
.tabs li.current::before, .tabs li.current::after { content: ""; position: absolute; bottom: 0; width: 12px; height: 12px; }
.tabs li.current::before { left: -12px; background: radial-gradient(circle at 0 0, transparent 12px, #f5e0d9 12px); }
.tabs li.current::after { right: -12px; background: radial-gradient(circle at 100% 0, transparent 12px, #f5e0d9 12px); }
.tile { width: 20px; height: 20px; background: #000; color: #fff; font: 700 8px/19px "Open Sans", sans-serif; text-align: center; }
.tile.d2l { font: 700 10px/20px "Liberation Serif", serif; }
.newtab { width: 36px; height: 34px; }
.winctl { display: flex; margin-left: auto; }
.winctl button { width: 56px; height: 40px; }
.toolbar { display: flex; align-items: center; height: 58px; padding: 0 6px 0 5px; }
.toolbar > button:not(.relaunch) { width: 45px; height: 40px; }
.omnibox { flex: 1; display: flex; align-items: center; gap: 22px; height: 42px; margin: 0 23px 0 10px; padding: 0 20px 0 6px; border-radius: 21px; background: #d6c5be; }
.siteinfo { width: 30px; height: 30px; border-radius: 50%; background: #f5e0d9; }
.url { flex: 1; margin-left: -12px; font-size: 17px; line-height: 24px; color: #5c5452; white-space: nowrap; }
.url b { font-weight: 400; color: #222; }
.bar { width: 2px; height: 20px; background: #e3ab99; margin: 0 20px 0 23px; }
.relaunch { height: 42px; margin-left: 15px; padding: 0 16px; gap: 14px; border-radius: 21px; background: #e3ab99; color: #33201a; white-space: nowrap; }
.bookmarks { display: flex; align-items: center; height: 43px; padding: 0 15px 8px; gap: 21px; }
.bookmarks a { display: flex; align-items: center; gap: 8px; }
.bookmarks .push { margin: 0 0 0 auto; }
.bookmarks .push + a { gap: 11px; }

/* console header */
.awsnav { display: flex; align-items: center; height: 35px; background: #232f3e; border-bottom: 1px solid #545b64; color: #fff; font-weight: 600; font-size: 10px; padding-left: 15px; }
.awslogo { display: flex; flex-direction: column; align-items: center; width: 26px; }
.awslogo span { font: 600 14px/12px "Open Sans", sans-serif; }
.sep { width: 1px; height: 18px; background: #414d5c; margin: 0 13px; }
.services { gap: 7px; }
.awssearch { display: flex; align-items: center; gap: 9px; width: 450px; height: 25px; margin-left: 12px; padding: 0 8px; background: #16191f; border: 1px solid #879596; border-radius: 2px; color: #d5dbdb; font-weight: 400; font-size: 11px; }
.awssearch input { flex: 1; min-width: 0; border: 0; background: none; padding: 0; }
.awssearch input::placeholder { color: #aab7b8; font-style: italic; opacity: 1; }
.awssearch span { color: #aab7b8; font-size: 12px; }
.awsright { display: flex; margin-left: auto; }
.awsright button { height: 18px; padding: 0 14px 0 13px; border-left: 1px solid #414d5c; white-space: nowrap; }
.awsright button:first-child { border: 0; }
.caret { width: 8px; height: 7px; background: currentColor; clip-path: polygon(0 0, 100% 0, 50% 100%); }
.awsright .caret { width: 7px; height: 7px; margin-left: 5px; }
.awsright .acct { padding-right: 12px; }

/* shell */
.app { flex: 1; min-height: 0; display: flex; }
.rail-l { width: 34px; border-right: 1px solid #d5dbdb; padding: 9px 0 0 10px; }
.rail-r { width: 30px; border-left: 1px solid #d5dbdb; }
.rail-r button { width: 100%; height: 31px; padding-left: 4px; border-bottom: 1px solid #d5dbdb; }
.rail-r button:last-child { border: 0; height: 30px; }
.main { flex: 1; min-width: 0; display: flex; flex-direction: column; }
.flash { display: flex; align-items: flex-start; height: 49px; padding: 8px 15px 0 9px; background: #1d8102; color: #fff; border-bottom: 1px solid #879596; }
.flash div { flex: 1; margin-left: 6px; line-height: 18px; }
.flash h2 { font-size: 11px; line-height: 14px; font-weight: 700; }
.flash p { padding-top: 2px; font-weight: 500; }
.flash a { border-bottom: 1px solid #fff; }
.flash button { height: 14px; }
.titlebar { display: flex; align-items: center; height: 59px; border-top: 9px solid #fafafa; border-bottom: 1px solid #aab7b8; padding: 0 20px 0 19px; }
.titlebar h1 { flex: 1; font-size: 15px; line-height: 20px; font-weight: 600; }
.modified { color: #687078; font-size: 10px; margin-right: 10px; }
.btn { height: 24px; border: 1px solid #545b64; border-radius: 2px; background: #fff; color: #545b64; font-weight: 700; white-space: nowrap; }
.actions { width: 95px; gap: 9px; margin-right: 11px; }
.save { width: 60px; margin-right: 10px; }
.run.btn { width: 58px; background: #f90; border-color: #f90; color: #16191f; }
.split { flex: 1; min-height: 0; display: flex; }
.left { flex: 1; min-width: 0; display: flex; flex-direction: column; }
.subtabs { display: flex; align-items: center; height: 35px; background: #fafafa; border-bottom: 1px solid #aab7b8; padding-left: 1px; color: #545b64; font-weight: 700; }
.subtabs a { padding: 0 18px; line-height: 18px; border-left: 1px solid #aab7b8; }
.subtabs a.on { align-self: stretch; line-height: 34px; padding: 0 16px; border: 0; border-bottom: 2px solid #16191f; color: #0073bb; }
.canvas { flex: 1; position: relative; background: #d5dbdb; overflow: hidden; }
.dots { position: absolute; inset: 0; }
.add { position: absolute; left: 8px; top: 8px; width: 45px; height: 46px; border-radius: 50%; background: #00a1c9; }
.graph { position: relative; width: 381px; height: 640px; margin: 0 auto; }
.edges { position: absolute; left: 0; top: 0; }
.node { position: absolute; display: flex; align-items: center; width: 171px; height: 43px; border: 1px solid #aab7b8; border-radius: 2px; background: linear-gradient(90deg, #fafafa 45px, #d5dbdb 45px, #d5dbdb 46px, #fff 46px); }
.node::before, .node::after { content: ""; position: absolute; left: 83px; width: 3px; height: 2px; background: #16191f; }
.node::before { top: -3px; }
.node::after { bottom: -2px; }
.node > svg { width: 20px; height: 20px; margin: 0 13px 0 12px; }
.node p { width: 90px; margin-left: 6px; font-size: 8px; line-height: 12px; white-space: nowrap; }
.node small { display: block; font-size: 7px; color: #687078; }
.node > svg.st { width: 12px; height: 12px; margin: 0 0 0 5px; color: #1d8102; }
.node.narrow p { width: 73px; }
.node.sel { border-color: #44a6e0; box-shadow: 0 0 0 1px #44a6e0; background: linear-gradient(90deg, #e8f5fd 45px, #44a6e0 45px, #44a6e0 46px, #fff 46px); }
.tools { position: absolute; right: 14px; top: 13px; width: 36px; height: 211px; background: #fff; display: flex; flex-direction: column; color: #545b64; }
.tools button { height: 28px; }
.tools button.gap { margin-top: 14px; }
.tools button:disabled { color: #aab7b8; }
.tools svg { width: 12px; height: 12px; }
.minimap { position: absolute; right: 14px; bottom: 13px; padding: 7px 6px; background: #f5f5f5; box-shadow: 0 0 5px rgba(0, 0, 0, .25); }
.minimap svg { background: #fff; }
.hsplit { height: 14px; background: #f2f3f3; display: flex; align-items: center; justify-content: center; }
.hsplit i { width: 12px; height: 4px; border: solid #95a5a6; border-width: 1px 0; }
.vsplit { width: 14px; background: #f2f3f3; display: flex; align-items: center; justify-content: center; }
.vsplit i { width: 4px; height: 12px; border: solid #95a5a6; border-width: 0 1px; }

/* properties */
.props { width: 626px; display: flex; flex-direction: column; border-left: 1px solid #eaeded; }
.phead { display: flex; justify-content: space-between; height: 35px; padding: 0 15px 0 1px; background: #fafafa; border-bottom: 1px solid #eaeded; }
.phead a { padding: 0 16px; line-height: 34px; font-weight: 700; color: #0073bb; border-bottom: 2px solid #16191f; }
.pbody { padding: 11px 17px 0 16px; }
.lbl { display: block; line-height: 16px; }
.hint { font: 10px/14px Roboto, sans-serif; color: #687078; }
.box { display: block; width: 100%; height: 24px; margin-top: 4px; padding: 0 7px; border: 1px solid #545b64; border-radius: 2px; background: #fff; appearance: none; }
.box.ph { color: #687078; font-style: italic; }
.box.low { margin-top: 5px; }
.box.tall { height: 26px; border-color: #95a5a6; padding: 0 9px; }
.l2 { margin-top: 11px; }
.l3 { margin-top: 14px; }
.sel-wrap { position: relative; }
.sel-wrap::after { content: ""; position: absolute; right: 10px; top: 9px; width: 9px; height: 7px; background: #545b64; clip-path: polygon(0 0, 100% 0, 50% 100%); }
.token { display: flex; justify-content: space-between; align-items: flex-start; width: 158px; height: 38px; margin-top: 3px; padding: 3px 7px; border: 1px solid #0073bb; background: #f1faff; }
.token small { display: block; font: 10px/16px Roboto, sans-serif; color: #687078; }
.token button { padding-top: 3px; color: #545b64; }
hr { margin: 12px 0 0; border: 0; border-top: 1px solid #d5dbdb; }
.locrow { display: flex; height: 24px; margin-top: 7px; }
.loc { flex: 1; min-width: 0; display: flex; align-items: center; gap: 8px; padding: 0 7px; border: 1px solid #545b64; border-radius: 2px; color: #545b64; }
.loc input { flex: 1; min-width: 0; border: 0; padding: 0; color: #16191f; }
.locrow i { width: 1px; background: #eaeded; margin: 0 13px 0 12px; }
.view { width: 80px; gap: 7px; margin-left: 13px; }
.browse { width: 94px; }
fieldset { border: 0; margin-top: 14px; }
legend { display: flex; line-height: 16px; }
legend a { margin-left: 6px; padding-left: 8px; border-left: 1px solid #eaeded; color: #0073bb; font-weight: 700; font-size: 10px; }
.radios { padding-top: 2px; }
.radios label { display: flex; align-items: center; gap: 7px; height: 20px; white-space: nowrap; }
.radios input { appearance: none; margin: 0; width: 12px; height: 12px; border: 1px solid #687078; border-radius: 50%; background: #fff; }
.radios input:checked { border: 4px solid #0073bb; }
.addkey { width: 145px; margin-top: 21px; }

/* console footer */
.awsfoot { display: flex; align-items: center; gap: 20px; height: 26px; padding: 0 10px 0 12px; background: #232f3e; border-top: 1px solid #545b64; color: #fff; font: 500 10px/16px Roboto, sans-serif; }
.awsfoot a { display: flex; align-items: center; gap: 5px; }
.awsfoot span { margin-left: auto; margin-right: 4px; }

/* taskbar */
.taskbar { display: flex; align-items: center; height: 58px; padding: 2px 24px 0 26px; color: #1a1a1a; font: 15px/20px "Open Sans", sans-serif; background: linear-gradient(90deg, #c8dfe9 0, #d7e2cf 7%, #e6e3b2 12%, #ecdcd0 17%, #f0dfd1 35%, #efdccd 52%, #e9e2a8 57%, #d9d6cd 61%, #e8e5a6 69%, #e9dbd0 74%, #f4e3d2 83%, #efe1bd 90%, #ecdacd 100%); }
.tsearch { display: flex; align-items: center; width: 273px; height: 38px; margin-left: 18px; padding: 0 7px 0 14px; gap: 12px; border: 1px solid #d5cfc4; border-radius: 19px; background: rgba(255, 255, 255, .75); }
.tsearch input { flex: 1; min-width: 0; border: 0; background: none; padding: 0; font-size: 16px; }
.tsearch input::placeholder { color: #555; opacity: 1; }
.apps { display: flex; align-items: center; margin-left: 3px; }
.apps li { position: relative; width: 55px; height: 48px; display: flex; align-items: center; justify-content: center; }
.apps li > svg { width: 30px; height: 30px; }
.apps li.run::after, .apps li.active::after { content: ""; position: absolute; left: 23px; bottom: 0; width: 8px; height: 4px; border-radius: 2px; background: #857a75; }
.apps li.active::after { left: 18px; width: 19px; background: #0a76d8; }
.apps li.active { background: linear-gradient(#f7ede7, #f7ede7) 4px 0 / 47px 48px no-repeat; }
.apps li > svg.warn { position: absolute; left: 29px; top: 4px; width: 20px; height: 18px; }
.count { position: absolute; left: 26px; top: 2px; width: 26px; height: 21px; border-radius: 11px; background: #0a76d8; color: #fff; font: 14px/21px "Open Sans", sans-serif; text-align: center; }
.apps li > .who { position: absolute; left: 28px; top: 9px; width: 15px; height: 15px; border-radius: 50%; color: #fff; font: 600 9px/15px "Open Sans", sans-serif; text-align: center; }
.who.a { background: #455a64; }
.who.k { background: #0097a7; }
.weather { display: flex; align-items: center; gap: 9px; margin-left: 233px; white-space: nowrap; }
.weather span { display: block; color: #5c5550; }
.tray { display: flex; align-items: center; margin-left: auto; gap: 10px; }
.mic { margin: 0 16px 0 14px; }
.lang { margin-right: 12px; text-align: center; }
.clock { text-align: right; margin-left: 9px; }
```
